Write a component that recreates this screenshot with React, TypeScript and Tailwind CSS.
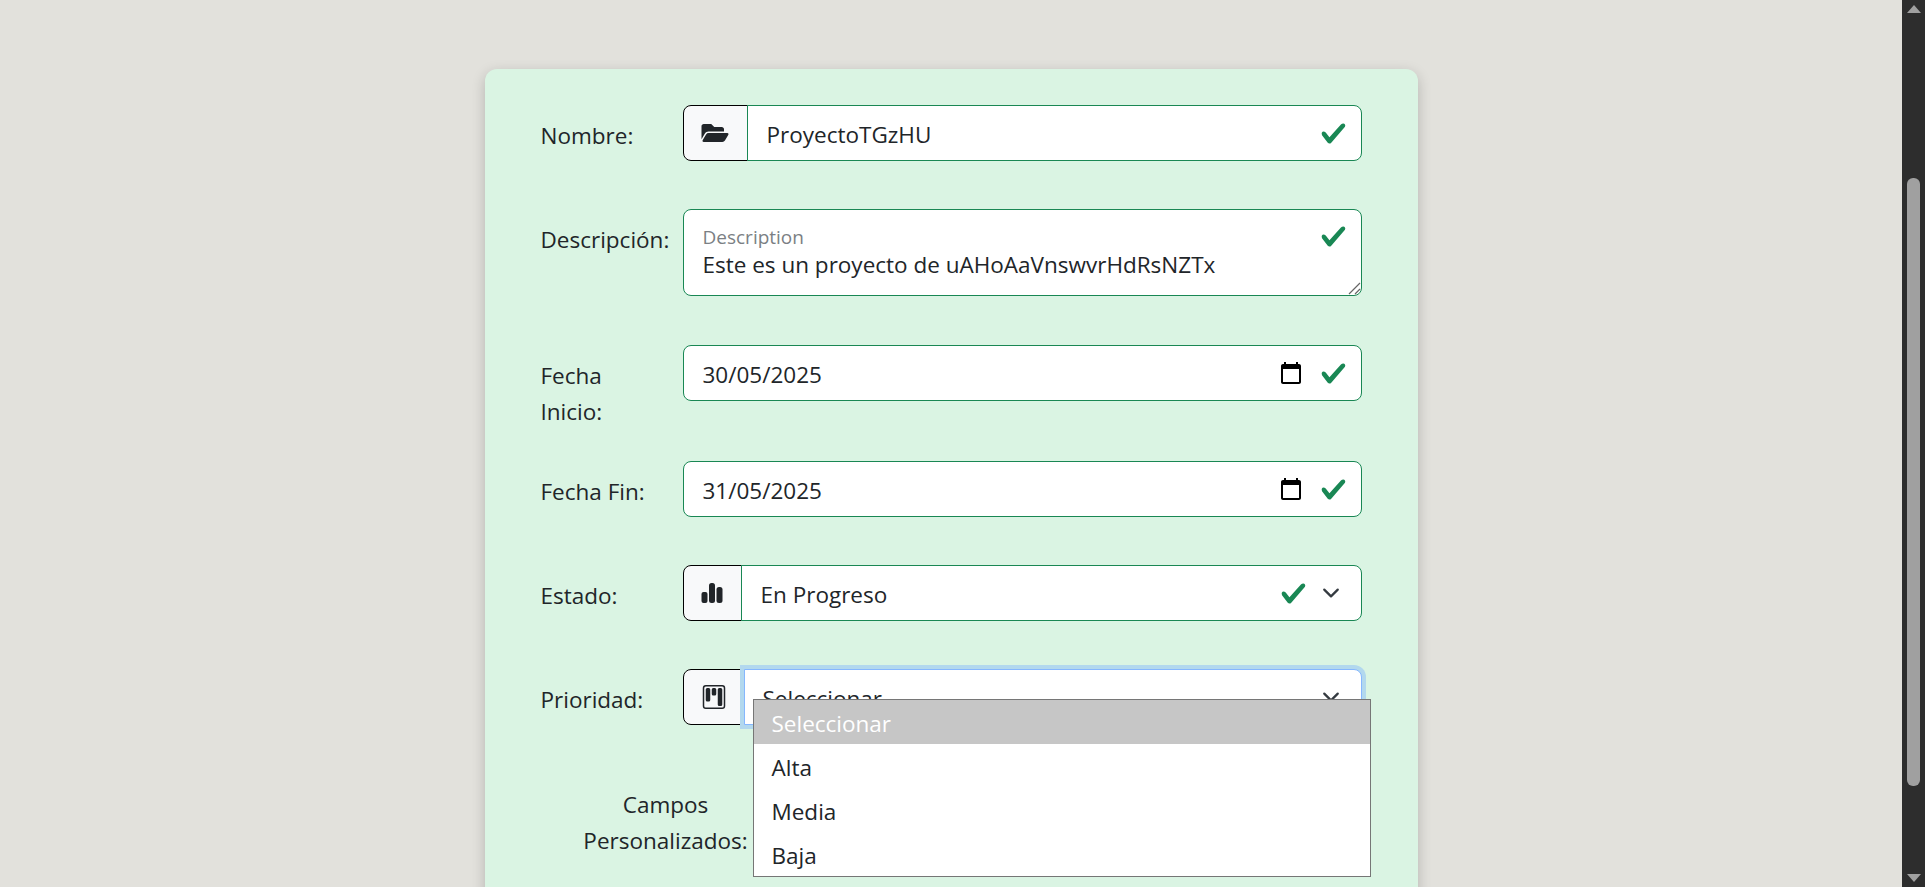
import { FaFolderOpen } from "react-icons/fa";
import { BsKanban } from "react-icons/bs";
import type { ReactNode } from "react";

function Check({ className = "" }: { className?: string }) {
  return (
    <svg viewBox="0 0 8 8" className={`h-[27px] w-[27px] shrink-0 ${className}`}>
      <path
        fill="#198754"
        d="M2.3 6.73.6 4.53c-.4-1.04.46-1.4 1.1-.8l1.1 1.4 3.4-3.8c.6-.63 1.6-.27 1.2.7l-4 4.6c-.43.5-.8.4-1.1.1z"
      />
    </svg>
  );
}

function Chevron() {
  return (
    <svg viewBox="0 0 16 16" className="h-[18px] w-[18px] shrink-0">
      <path
        d="m2 5 6 6 6-6"
        fill="none"
        stroke="#343a40"
        strokeWidth="2"
        strokeLinecap="round"
        strokeLinejoin="round"
      />
    </svg>
  );
}

function CalendarIcon() {
  return (
    <svg viewBox="0 0 24 24" className="h-6 w-6 shrink-0" fill="#000">
      <path d="M20 3h-1V1h-2v2H7V1H5v2H4c-1.1 0-2 .9-2 2v16c0 1.1.9 2 2 2h16c1.1 0 2-.9 2-2V5c0-1.1-.9-2-2-2zm0 18H4V8h16v13z" />
    </svg>
  );
}

function BarsIcon() {
  return (
    <svg viewBox="0 0 22 22" className="h-[22px] w-[22px]" fill="#212529">
      <rect x="0.5" y="10" width="6" height="11" rx="2" />
      <rect x="8" y="1" width="6" height="20" rx="2.5" />
      <rect x="15.5" y="5" width="6" height="16" rx="2.5" />
    </svg>
  );
}

function Addon({ w, children }: { w: string; children: ReactNode }) {
  return (
    <div
      className={`flex h-full shrink-0 items-center justify-center rounded-l-lg border border-black bg-[#f8f9fa] text-[#212529] ${w}`}
    >
      {children}
    </div>
  );
}

function Row({
  label,
  children,
  className = "",
}: {
  label: ReactNode;
  children: ReactNode;
  className?: string;
}) {
  return (
    <div className={`flex items-start ${className}`}>
      <div className="w-[142px] shrink-0 pt-[13px] leading-[36px]">{label}</div>
      {children}
    </div>
  );
}

function DateField({ value }: { value: string }) {
  return (
    <div className="flex h-[56px] flex-1 items-center rounded-lg border border-[#198754] bg-white pl-[19px] pr-[14px]">
      <span className="flex-1 pt-[3px]">{value}</span>
      <CalendarIcon />
      <Check className="ml-[17px]" />
    </div>
  );
}

export default function App() {
  return (
    <div className="flex h-[887px] w-full overflow-hidden bg-[#e2e1dc] font-['Open_Sans','Noto_Sans',sans-serif] text-[22.5px] text-[#212529]">
      <main className="flex-1 overflow-hidden">
        <div className="mx-auto mt-[69px] h-[900px] w-[933px] rounded-xl bg-[#daf4e3] pl-[56px] pr-[56px] pt-[36px] shadow-[0_4px_14px_rgba(0,0,0,0.2)]">
          <Row label="Nombre:" className="mb-[48px]">
            <div className="flex h-[56px] flex-1 items-center">
              <Addon w="w-[65px]">
                <FaFolderOpen className="h-[24px] w-[28px]" />
              </Addon>
              <div className="-ml-px flex h-full flex-1 items-center rounded-r-lg border border-[#198754] bg-white pl-[19px] pr-[14px]">
                <span className="flex-1 pt-[3px]">ProyectoTGzHU</span>
                <Check />
              </div>
            </div>
          </Row>

          <Row label="Descripción:" className="mb-[49px]">
            <div className="relative flex h-[87px] flex-1 flex-col rounded-lg border border-[#198754] bg-white pl-[19px] pr-[13px] pt-[15px]">
              <span className="text-[19px] leading-[25px] text-[#7b7f84]">Description</span>
              <span className="leading-[30px]">Este es un proyecto de uAHoAaVnswvrHdRsNZTx</span>
              <Check className="absolute right-[14px] top-[13px]" />
              <svg viewBox="0 0 14 14" className="absolute bottom-0 right-0 h-[14px] w-[14px]" stroke="#666" strokeWidth="1.2">
                <path d="M2 13 13 2M8 13l5-5" />
              </svg>
            </div>
          </Row>

          <Row label={<>Fecha<br />Inicio:</>}>
            <div className="flex h-[116px] flex-1 items-start">
              <DateField value="30/05/2025" />
            </div>
          </Row>

          <Row label="Fecha Fin:" className="mb-[48px]">
            <DateField value="31/05/2025" />
          </Row>

          <Row label="Estado:" className="mb-[48px]">
            <div className="flex h-[56px] flex-1 items-center">
              <Addon w="w-[59px]">
                <BarsIcon />
              </Addon>
              <div className="-ml-px flex h-full flex-1 items-center rounded-r-lg border border-[#198754] bg-white pl-[19px] pr-[21px]">
                <span className="flex-1 pt-[3px]">En Progreso</span>
                <Check className="mr-[15px]" />
                <Chevron />
              </div>
            </div>
          </Row>

          <Row label="Prioridad:" className="mb-[48px]">
            <div className="relative flex h-[56px] flex-1 items-center">
              <Addon w="w-[62px]">
                <BsKanban className="h-[24px] w-[24px]" />
              </Addon>
              <div className="z-10 -ml-px flex h-full flex-1 items-center rounded-r-lg border border-[#86b7fe] bg-white pl-[18px] pr-[21px] shadow-[0_0_0_4px_#b2d8ee]">
                <span className="flex-1 pt-[3px]">Seleccionar</span>
                <Chevron />
              </div>
              <ul className="absolute left-[70px] top-[30px] z-20 w-[618px] border border-[#767676] bg-white">
                <li className="h-[44px] bg-[#c6c6c6] pl-[18px] leading-[48px] text-white">Seleccionar</li>
                <li className="h-[44px] pl-[18px] leading-[48px]">Alta</li>
                <li className="h-[44px] pl-[18px] leading-[48px]">Media</li>
                <li className="h-[44px] pl-[18px] leading-[48px]">Baja</li>
              </ul>
            </div>
          </Row>

          <div className="w-[250px] pt-[14px] text-center leading-[36px]">
            Campos
            <br />
            Personalizados:
          </div>
        </div>
      </main>

      <aside className="flex h-full w-[23px] shrink-0 flex-col items-center bg-[#2d2d2d] py-[5px]">
        <div className="h-0 w-0 border-x-[7px] border-b-[8px] border-x-transparent border-b-[#a0a0a0]" />
        <div className="mb-[88px] mt-[165px] w-[13px] flex-1 rounded-[6px] bg-[#a0a0a0]" />
        <div className="h-0 w-0 border-x-[7px] border-t-[8px] border-x-transparent border-t-[#a0a0a0]" />
      </aside>
    </div>
  );
}
